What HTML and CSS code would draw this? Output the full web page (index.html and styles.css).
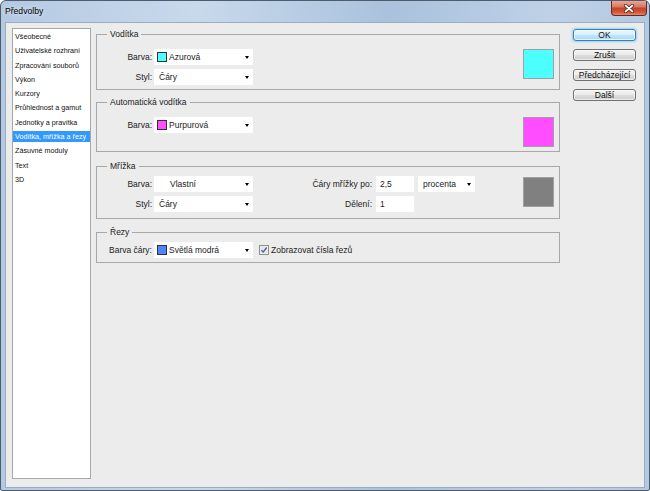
FILE: index.html
```html
<!DOCTYPE html>
<html lang="cs">
<head>
<meta charset="utf-8">
<title>Předvolby</title>
<link rel="stylesheet" href="styles.css">
</head>
<body>
<div class="window">
  <div class="titlebar">
    <span class="title">Předvolby</span>
    <div class="close">
      <svg width="12" height="9" viewBox="0 0 12 9"><path d="M2.5 1.5 L9.5 7.5 M9.5 1.5 L2.5 7.5" stroke="#4a1c12" stroke-width="3.2" stroke-linecap="round"/><path d="M2.5 1.5 L9.5 7.5 M9.5 1.5 L2.5 7.5" stroke="#fff" stroke-width="1.7" stroke-linecap="round"/></svg>
    </div>
  </div>
  <div class="client">
    <ul class="nav">
      <li>Všeobecné</li>
      <li>Uživatelské rozhraní</li>
      <li>Zpracování souborů</li>
      <li>Výkon</li>
      <li>Kurzory</li>
      <li>Průhlednost a gamut</li>
      <li>Jednotky a pravítka</li>
      <li class="sel">Vodítka, mřížka a řezy</li>
      <li>Zásuvné moduly</li>
      <li>Text</li>
      <li>3D</li>
    </ul>

    <div class="main">
      <section class="group g1">
        <div class="legend">Vodítka</div>
        <div class="gbody">
          <div class="form">
            <div class="row"><span class="lbl">Barva:</span><div class="select"><span class="sw cyan"></span><span>Azurová</span><i class="arrow"></i></div></div>
            <div class="row"><span class="lbl">Styl:</span><div class="select plain"><span>Čáry</span><i class="arrow"></i></div></div>
          </div>
          <div class="bigsw cyan"></div>
        </div>
      </section>

      <section class="group g2">
        <div class="legend">Automatická vodítka</div>
        <div class="gbody">
          <div class="form">
            <div class="row"><span class="lbl">Barva:</span><div class="select"><span class="sw magenta"></span><span>Purpurová</span><i class="arrow"></i></div></div>
          </div>
          <div class="bigsw magenta"></div>
        </div>
      </section>

      <section class="group g3">
        <div class="legend">Mřížka</div>
        <div class="gbody">
          <div class="form">
            <div class="row"><span class="lbl">Barva:</span><div class="select"><span class="sw blank"></span><span>Vlastní</span><i class="arrow"></i></div></div>
            <div class="row"><span class="lbl">Styl:</span><div class="select plain"><span>Čáry</span><i class="arrow"></i></div></div>
          </div>
          <div class="form col2">
            <div class="row"><span class="lbl2">Čáry mřížky po:</span><div class="input">2,5</div><div class="select small plain"><span>procenta</span><i class="arrow"></i></div></div>
            <div class="row"><span class="lbl2">Dělení:</span><div class="input">1</div></div>
          </div>
          <div class="bigsw gray"></div>
        </div>
      </section>

      <section class="group g4">
        <div class="legend">Řezy</div>
        <div class="gbody">
          <div class="row"><span class="lbl">Barva čáry:</span><div class="select"><span class="sw blue"></span><span>Světlá modrá</span><i class="arrow"></i></div>
            <svg class="cb" width="10" height="10" viewBox="0 0 10 10"><rect x="0.5" y="0.5" width="9" height="9" fill="#f6f6f6" stroke="#8e8f8f"/><rect x="1.5" y="1.5" width="7" height="7" fill="#e4e4e4"/><path d="M2.4 5.1 L4.2 7.1 L7.7 2.5" fill="none" stroke="#4d5f97" stroke-width="1.3"/></svg>
            <span class="cbl">Zobrazovat čísla řezů</span>
          </div>
        </div>
      </section>
    </div>

    <div class="buttons">
      <div class="btn default">OK</div>
      <div class="btn">Zrušit</div>
      <div class="btn">Předcházející</div>
      <div class="btn">Další</div>
    </div>
  </div>
</div>
</body>
</html>
```

FILE: styles.css
```css
* { box-sizing: border-box; margin: 0; padding: 0; }
html, body { width: 650px; height: 491px; overflow: hidden; }
body {
  font-family: "Liberation Sans", Arial, sans-serif;
  color: #1b1b1b;
  background: #fff;
}

.window {
  width: 650px;
  height: 491px;
  border: 1px solid #4e5d6e;
  border-radius: 6px 6px 2px 2px;
  background: linear-gradient(90deg, #b4c9e2 0%, #c8d9eb 30%, #aac2dd 60%, #bed1e7 85%, #b3c8e1 100%);
  display: flex;
  flex-direction: column;
  padding: 0 4px 2px;
}

.titlebar {
  height: 21px;
  display: flex;
  align-items: flex-start;
}
.title {
  font-size: 8.6px;
  line-height: 21px;
  color: #000;
  text-shadow: 0 0 5px rgba(255, 255, 255, 0.9);
}
.close {
  margin-left: auto;
  margin-right: -2px;
  margin-top: 0;
  width: 36px;
  height: 15px;
  border: 1px solid #6b2a1f;
  border-top: none;
  border-radius: 0 0 4px 4px;
  background: linear-gradient(#e9a897 0%, #d97a63 40%, #c5432b 52%, #cf5438 78%, #e4896a 100%);
  display: flex;
  align-items: center;
  justify-content: center;
}

.client {
  flex: 1;
  background: #ececec;
  border: 1px solid #98acc2;
  display: flex;
  align-items: flex-start;
  padding: 5px 7px 0 6px;
}

.nav {
  list-style: none;
  width: 79px;
  height: 451px;
  flex: none;
  border: 1px solid #a8a8a8;
  background: #fff;
  padding-top: 2px;
}
.nav li {
  height: 11px;
  line-height: 11px;
  margin-bottom: 3.3px;
  padding-left: 2px;
  font-size: 7.2px;
  color: #111;
  white-space: nowrap;
}
.nav li.sel {
  background: #3399ff;
  color: #fff;
}

.main {
  width: 464px;
  flex: none;
  margin-left: 5px;
  margin-top: 6px;
  font-size: 8.5px;
}

.group {
  border: 1px solid #a8a8a8;
}
.g1 { height: 56px; }
.g2 { height: 50px; margin-top: 12px; }
.g3 { height: 53px; margin-top: 14px; }
.g4 { height: 31px; margin-top: 13px; }

.legend {
  display: table;
  margin: -6px 0 0 10px;
  padding: 0 3px;
  height: 11px;
  line-height: 11px;
  background: #ececec;
}

.gbody {
  display: flex;
  align-items: flex-start;
}
.g1 .gbody, .g2 .gbody { padding-top: 9px; }
.g3 .gbody, .g4 .gbody { padding-top: 4px; }

.row {
  display: flex;
  align-items: center;
  height: 16px;
}
.row + .row { margin-top: 4px; }

.lbl {
  width: 55px;
  margin-right: 2px;
  text-align: right;
  white-space: nowrap;
}
.lbl2 {
  width: 115px;
  margin-right: 4px;
  text-align: right;
  white-space: nowrap;
}
.col2 { margin-left: 4px; }

.select {
  width: 99px;
  height: 16px;
  background: #fff;
  display: flex;
  align-items: center;
  padding-left: 3px;
  white-space: nowrap;
}
.select.plain { padding-left: 5px; }
.select.small { width: 57px; margin-left: 4px; }

.arrow {
  margin-left: auto;
  margin-right: 4px;
  width: 0;
  height: 0;
  border-top: 3px solid #000;
  border-left: 2.5px solid transparent;
  border-right: 2.5px solid transparent;
}

.sw {
  width: 10px;
  height: 10px;
  margin-right: 2px;
  border: 1px solid #333;
  flex: none;
}
.sw.blank { border: none; margin-right: 3px; }

.input {
  width: 38px;
  height: 16px;
  background: #fff;
  padding-left: 4px;
  line-height: 16px;
}

.cyan { background: #4dffff; }
.magenta { background: #ff4dff; }
.gray { background: #808080; }
.blue { background: #4f86f7; }

.bigsw {
  margin-left: auto;
  margin-right: 5px;
  width: 31px;
  height: 30px;
  border: 1px solid #a0a0a0;
  flex: none;
}
.g3 .bigsw { margin-top: 1px; }

.cb { margin-left: 6px; flex: none; }
.cbl { margin-left: 2px; white-space: nowrap; }

.buttons {
  width: 63px;
  flex: none;
  margin-left: 13px;
  margin-top: 1px;
  display: flex;
  flex-direction: column;
  gap: 8px;
}
.btn {
  height: 12px;
  border: 1px solid #707070;
  border-radius: 3px;
  background: linear-gradient(#f3f3f3 0%, #ebebeb 45%, #dddddd 50%, #cfcfcf 100%);
  font-size: 8.5px;
  line-height: 10px;
  text-align: center;
  color: #111;
  box-shadow: inset 0 0 0 1px rgba(255, 255, 255, 0.6);
}
.btn.default {
  border-color: #3c7fb1;
  background: linear-gradient(#eaf6fd 0%, #d9f0fc 45%, #bee6fd 50%, #a7d9f5 100%);
  box-shadow: 0 0 2px 1px #8fd3f7, inset 0 0 0 1px rgba(255, 255, 255, 0.7);
}
```
